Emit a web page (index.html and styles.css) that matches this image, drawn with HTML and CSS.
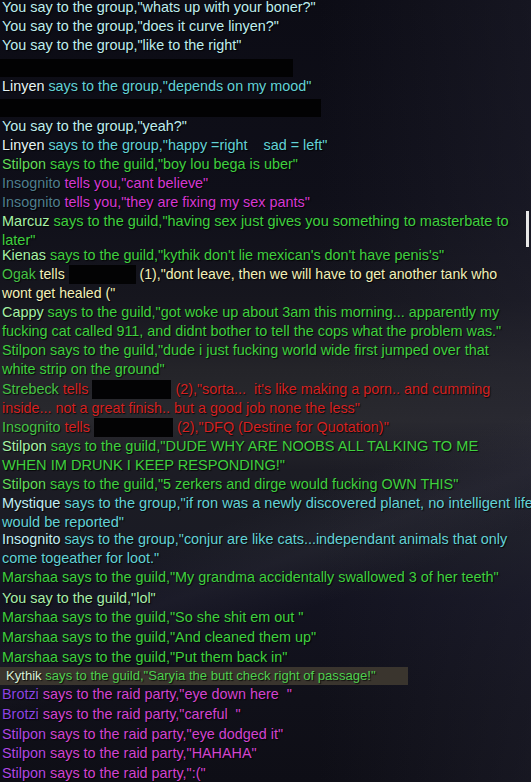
FILE: index.html
```html
<!DOCTYPE html>
<html>
<head>
<meta charset="utf-8">
<link rel="stylesheet" href="styles.css">
</head>
<body>
<div class="log">
  <div class="line first c-you">You say to the group,"whats up with your boner?"</div>
  <div class="line c-you">You say to the group,"does it curve linyen?"</div>
  <div class="line c-you">You say to the group,"like to the right"</div>
  <div class="bar bar1"></div>
  <div class="line"><span class="n-white">Linyen</span> <span class="c-grp">says to the group,"depends on my mood"</span></div>
  <div class="bar bar2"></div>
  <div class="line c-you">You say to the group,"yeah?"</div>
  <div class="line"><span class="n-white">Linyen</span> <span class="c-grp">says to the group,"happy =right &nbsp;&nbsp; sad = left"</span></div>
  <div class="line c-guild"><span class="n-sgreen">Stilpon</span> says to the guild,"boy lou bega is uber"</div>
  <div class="line"><span class="n-teal">Insognito</span> <span class="c-tell">tells you,"cant believe"</span></div>
  <div class="line"><span class="n-teal">Insognito</span> <span class="c-tell">tells you,"they are fixing my sex pants"</span></div>
  <div class="line big"><span class="n-lgreen">Marcuz</span> <span class="c-guild">says to the guild,"having sex just gives you something to masterbate to<br>later"</span></div>
  <div class="line tight"><span class="n-lgreen">Kienas</span> <span class="c-guild">says to the guild,"kythik don't lie mexican's don't have penis's"</span></div>
  <div class="line mid"><span class="n-green">Ogak</span> <span class="c-yel">tells <span class="redact r-ogak"></span> (1),"dont leave, then we will have to get another tank who<br>wont get healed ("</span></div>
  <div class="line"><span class="n-lgreen">Cappy</span> <span class="c-guild">says to the guild,"got woke up about 3am this morning... apparently my<br>fucking cat called 911, and didnt bother to tell the cops what the problem was."</span></div>
  <div class="line c-guild">Stilpon says to the guild,"dude i just fucking world wide first jumped over that<br>white strip on the ground"</div>
  <div class="line nudge"><span class="n-green">Strebeck</span> <span class="c-red">tells <span class="redact r-tell"></span> (2),"sorta... &nbsp;it's like making a porn.. and cumming<br>inside... not a great finish.. but a good job none the less"</span></div>
  <div class="line"><span class="n-green">Insognito</span> <span class="c-red">tells <span class="redact r-tell"></span> (2),"DFQ (Destine for Quotation)"</span></div>
  <div class="line wider c-guild"><span class="n-lgreen">Stilpon</span> says to the guild,"DUDE WHY ARE NOOBS ALL TALKING TO ME<br>WHEN IM DRUNK I KEEP RESPONDING!"</div>
  <div class="line c-guild"><span class="n-sgreen">Stilpon</span> says to the guild,"5 zerkers and dirge would fucking OWN THIS"</div>
  <div class="line wider"><span class="n-cyan">Mystique</span> <span class="c-grp">says to the group,"if ron was a newly discovered planet, no intelligent life<br>would be reported"</span></div>
  <div class="line tight2"><span class="n-cyan">Insognito</span> <span class="c-grp">says to the group,"conjur are like cats...independant animals that only<br>come togeather for loot."</span></div>
  <div class="line c-guild">Marshaa says to the guild,"My grandma accidentally swallowed 3 of her teeth"</div>
  <div class="line loose gap c-lgreen">You say to the guild,"lol"</div>
  <div class="line loose c-guild">Marshaa says to the guild,"So she shit em out "</div>
  <div class="line loose c-guild">Marshaa says to the guild,"And cleaned them up"</div>
  <div class="line loose c-guild">Marshaa says to the guild,"Put them back in"</div>
  <div class="kythik"><span class="n-kwhite">Kythik</span> says to the guild,"Saryia the butt check right of passage!"</div>
  <div class="line loose"><span class="n-purple">Brotzi</span> <span class="c-raid">says to the raid party,"eye down here &nbsp;"</span></div>
  <div class="line loose"><span class="n-purple">Brotzi</span> <span class="c-raid">says to the raid party,"careful &nbsp;"</span></div>
  <div class="line loose"><span class="n-violet">Stilpon</span> <span class="c-raid">says to the raid party,"eye dodged it"</span></div>
  <div class="line loose"><span class="n-violet">Stilpon</span> <span class="c-raid">says to the raid party,"HAHAHA"</span></div>
  <div class="line loose"><span class="n-violet">Stilpon</span> <span class="c-raid">says to the raid party,":("</span></div>
  <div class="edge-mark"></div>
</div>
</body>
</html>
```

FILE: styles.css
```css
html, body {
  margin: 0;
  padding: 0;
  width: 531px;
  height: 782px;
  overflow: hidden;
  background: #0d0d17;
}

.log {
  position: relative;
  width: 531px;
  height: 782px;
  overflow: hidden;
  font-family: "Liberation Sans", Arial, sans-serif;
  font-size: 14.4px;
  background:
    linear-gradient(160deg, rgba(0,0,0,0) 0%, rgba(0,0,0,0) 62%, rgba(70,70,85,0.16) 68%, rgba(0,0,0,0) 74%, rgba(0,0,0,0) 100%),
    linear-gradient(90deg, rgba(0,0,0,0) 0%, rgba(0,0,0,0) 60%, rgba(40,40,55,0.35) 100%),
    linear-gradient(180deg,
      #0c0c15 0px,
      #0f0f19 200px,
      #16161e 300px,
      #242429 370px,
      #29292e 420px,
      #1c1c24 470px,
      #1a1b24 540px,
      #131320 600px,
      #101019 700px,
      #0e0e16 782px);
  text-shadow: 1px 1px 1px rgba(0,0,0,0.8);
}

.line {
  line-height: 19px;
  padding-left: 2px;
  white-space: nowrap;
}

.line.first { margin-top: -2.5px; }
.line.tight { margin-top: -4px; }
.line.tight2 { margin-top: -2px; }
.line.big { font-size: 14.5px; }
.line.mid { font-size: 14.1px; }
.line.wider { font-size: 14.6px; }
.line.nudge { margin-top: 0.5px; }
.line.loose { line-height: 19.7px; }
.line.gap { margin-top: 2px; }

.bar {
  background: #020203;
  height: 18px;
}
.bar1 { width: 293px; margin-top: 4px; }
.bar2 { width: 321px; margin-top: 3.5px; }

.redact {
  display: inline-block;
  background: #030304;
  height: 19px;
  vertical-align: -5px;
}
.r-ogak { width: 67px; }
.r-tell { width: 79px; }

.kythik {
  box-sizing: border-box;
  background: #3a352e;
  width: 408px;
  height: 18px;
  line-height: 18px;
  font-size: 13.1px;
  padding-left: 6px;
  color: #4fd04f;
  white-space: nowrap;
}

.c-you { color: #bfeeee; }
.n-white { color: #e6f4f4; }
.c-grp { color: #62d2d6; }
.n-cyan { color: #c0eef4; }
.c-guild { color: #3fd03f; }
.n-lgreen { color: #a6f2a6; }
.n-sgreen { color: #62dc5a; }
.n-green { color: #45c245; }
.c-lgreen { color: #a8eea8; }
.n-teal { color: #4f7f8e; }
.c-tell { color: #d638d2; }
.c-yel { color: #f2f0b8; }
.c-red { color: #d42222; }
.n-kwhite { color: #d8f0d8; }
.n-purple { color: #8d44e0; }
.n-violet { color: #b048e2; }
.c-raid { color: #d244cf; }

.edge-mark {
  position: absolute;
  right: 2px;
  top: 211px;
  width: 3px;
  height: 36px;
  background: #e8e8e8;
}
```
